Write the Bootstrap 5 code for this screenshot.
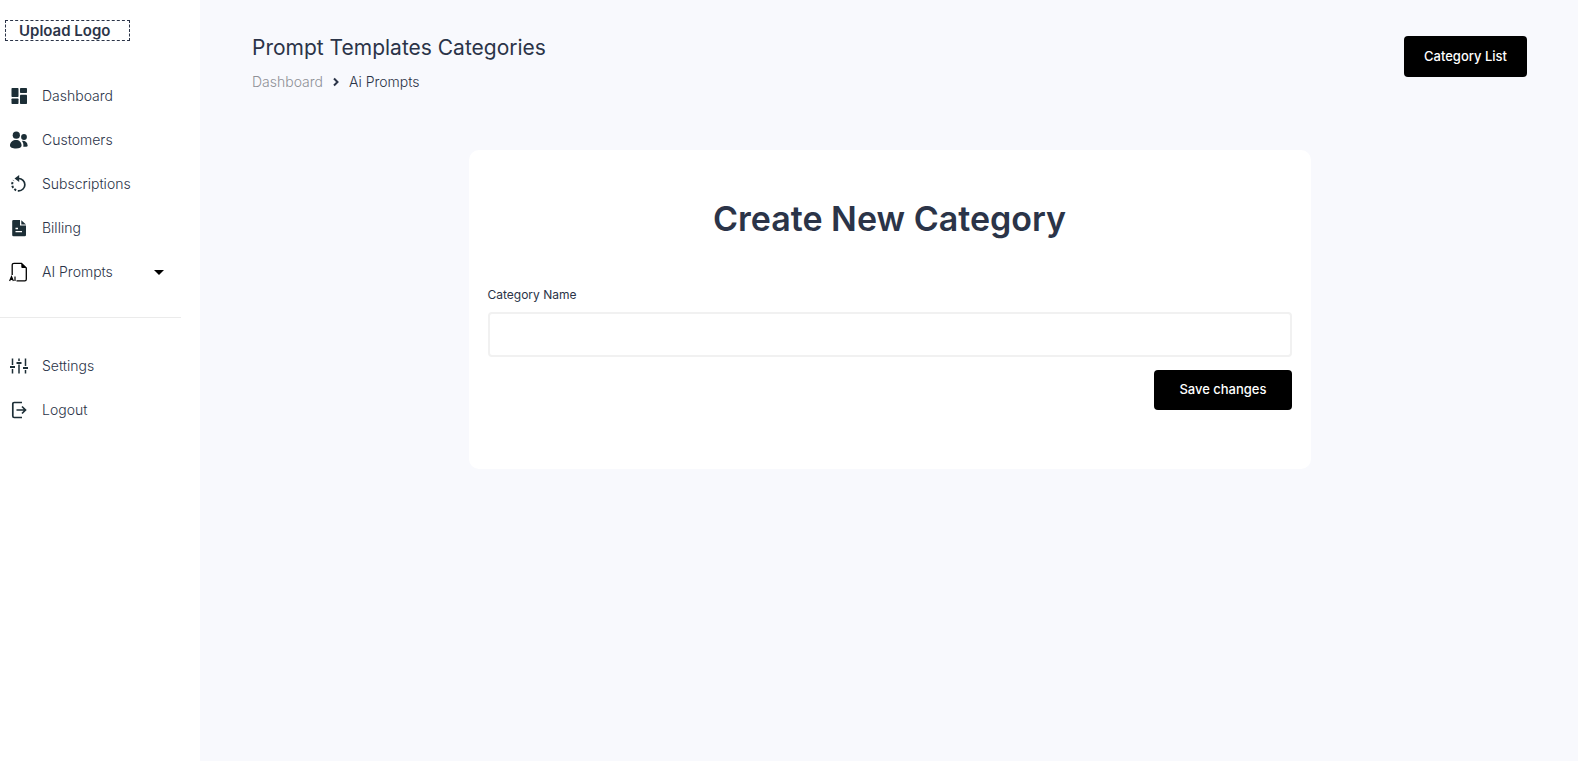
<!DOCTYPE html>
<html lang="en">
<head>
<meta charset="utf-8">
<meta name="viewport" content="width=device-width, initial-scale=1">
<title>Prompt Templates Categories</title>
<link href="https://cdn.jsdelivr.net/npm/bootstrap@5.3.0/dist/css/bootstrap.min.css" rel="stylesheet">
<style>
body { font-family: Inter, "Open Sans", sans-serif; font-size: 13px; color: #2b3448; background: #f8f9fd; }
a { color: inherit; text-decoration: none; }
.sidebar { width: 200px; padding-top: 20px; }
.logo-upload { width: 125px; height: 21px; margin-left: 5px; margin-bottom: 32px; padding: 0 13px; border: 1px dashed #2b3448; font-size: 15px; line-height: 18px; font-weight: 600; background: none; color: inherit; }
.side-link { height: 44px; padding: 0 36px 0 9px; gap: 13px; color: #2b3448; font-weight: 300; font-size: 14px; }
.side-link svg { width: 20px; height: 20px; flex: none; color: #1c2e36; margin-top: 2px; }
.side-link .caret { width: 10px; height: 5px; color: #000; }
.side-rule { width: 181px; height: 1px; margin: 24px 0 25px; background: #ebebeb; }
.main-area { padding: 36px 39px 36px 40px; }
.page-title { font-size: 21px; line-height: 24px; font-weight: 400; margin-bottom: 12px; }
.crumbs { gap: 10px; font-weight: 300; font-size: 14px; line-height: 20px; }
.crumbs a { color: #8f9197; }
.btn-ink { height: 41px; background: #000; color: #fff; border: 0; border-radius: 4px; font-size: 13px; font-weight: 500; padding: 0 20px; }
.btn-ink:hover { background: #222; color: #fff; }
.btn-save { height: 40px; padding: 0 25px; }
.page-head { margin-bottom: 58px; }
.panel { border-radius: 10px; padding: 49px 19px 59px; }
.panel h2 { font-size: 34px; line-height: 40px; font-weight: 600; margin-bottom: 47px; }
.panel label { font-size: 12px; line-height: 18px; margin-bottom: 8px; font-weight: 400; }
.panel .form-control { height: 45px; border: 2px solid #f1f1f1; border-radius: 4px; margin-bottom: 13px; }
</style>
</head>
<body>
<div class="d-flex min-vh-100">
  <aside class="sidebar bg-white flex-shrink-0">
    <button type="button" class="logo-upload d-block text-start">Upload Logo</button>
    <nav aria-label="Main">
      <a href="#" class="side-link d-flex align-items-center">
        <svg viewBox="0 0 20 20" fill="currentColor"><rect x="2.500" y="2" width="7" height="9" rx=".7"/><rect x="11" y="2" width="7" height="5" rx=".7"/><rect x="2.500" y="12.500" width="7" height="5.500" rx=".7"/><rect x="11" y="8.700" width="7" height="9.300" rx=".7"/></svg>
        <span>Dashboard</span></a>
      <a href="#" class="side-link d-flex align-items-center">
        <svg viewBox="0 0 20 20" fill="currentColor"><circle cx="7.300" cy="5.200" r="3.600"/><circle cx="15" cy="7" r="2.900"/><path d="M1 15.500C1 12 4 10 7 10s5.600 2 5.600 5.500C12.600 17.500 10.500 18.500 7 18.500S1 17.500 1 15.500zM13 10.900c3-.3 5.500 1.500 5.700 5-.7.700-2.500 1-4.400.9.400-2.500-.1-4.500-1.300-5.900z"/></svg>
        <span>Customers</span></a>
      <a href="#" class="side-link d-flex align-items-center">
        <svg viewBox="0 0 20 20" fill="none" stroke="currentColor" stroke-width="1.700"><path d="M8.500 4.500h1.200a6 6 0 1 1 0 12.300H8.800"/><path d="M7.200 16.200a6.200 6.200 0 0 1-2.600-9.800" stroke-dasharray="2.200 1.600" stroke-width="2"/><path d="M10.200 1v7L5.500 4.500z" fill="currentColor" stroke="none"/></svg>
        <span>Subscriptions</span></a>
      <a href="#" class="side-link d-flex align-items-center">
        <svg viewBox="0 0 20 20"><path fill="currentColor" d="M4.500 2H11v5.500h6V17a1.300 1.300 0 0 1-1.300 1.300H4.500A1.300 1.300 0 0 1 3.200 17V3.300A1.300 1.300 0 0 1 4.500 2zM12.300 2.200 17 6.500h-4.700z"/><path stroke="#fff" stroke-width="1.300" d="M6.500 10.500H9M6.500 13.700H13"/></svg>
        <span>Billing</span></a>
      <a href="#" class="side-link d-flex align-items-center" aria-expanded="false">
        <svg viewBox="0 0 20 20" fill="none" stroke="#000"><path stroke-width="1.300" d="M3.200 13V3.200C3.200 2 4 1.400 5 1.400h7.500L17.300 6v11.200c0 1-.6 1.600-1.500 1.600H7.500"/><path d="M12.300 1v3.800c0 .8.500 1.200 1.200 1.200h4z" fill="#000" stroke="none"/><path stroke-width="1.200" d="M.6 19 2.500 14.500 4.400 19M1.200 17.500h2.600M6 14.500V19"/></svg>
        <span class="me-auto">AI Prompts</span>
        <svg class="caret" viewBox="0 0 10 5" fill="currentColor"><path d="M0 0h10L5 5z"/></svg></a>
      <div class="side-rule"></div>
      <a href="#" class="side-link d-flex align-items-center">
        <svg viewBox="0 0 20 20" fill="none" stroke="currentColor" stroke-width="1.500"><path d="M3.500 2.500V9M3.500 13v4.500M10 2.500V5M10 8.500v9M16.500 2.500V10M16.500 14v3.500"/><path stroke-width="2.200" d="M1 11h5M7.500 7h5M14 12h5"/></svg>
        <span>Settings</span></a>
      <a href="#" class="side-link d-flex align-items-center">
        <svg viewBox="0 0 20 20" fill="none" stroke="currentColor" stroke-width="1.700"><path d="M13 2.500H5.200C4.300 2.500 3.800 3 3.800 3.900v12.200c0 .9.500 1.400 1.400 1.400H13M7.500 10h8.800M13 6.500l3.500 3.500-3.500 3.500"/></svg>
        <span>Logout</span></a>
    </nav>
  </aside>
  <main class="main-area flex-grow-1">
    <div class="page-head d-flex justify-content-between align-items-start px-2 mx-1">
      <div>
        <h1 class="page-title">Prompt Templates Categories</h1>
        <nav class="crumbs d-flex align-items-center" aria-label="Breadcrumb">
          <a href="#">Dashboard</a>
          <svg width="6" height="10" viewBox="0 0 6 10" fill="none" stroke="currentColor" stroke-width="2"><path d="M1 1.500 4.500 5 1 8.500"/></svg>
          <span>Ai Prompts</span>
        </nav>
      </div>
      <button type="button" class="btn btn-ink">Category List</button>
    </div>
    <div class="row justify-content-center g-0">
      <div class="col-8 px-2">
        <form class="panel bg-white mx-1">
          <h2 class="text-center">Create New Category</h2>
          <label for="catName" class="d-block">Category Name</label>
          <input id="catName" type="text" class="form-control">
          <div class="d-flex justify-content-end">
            <button type="submit" class="btn btn-ink btn-save">Save changes</button>
          </div>
        </form>
      </div>
    </div>
  </main>
</div>
<script src="https://cdn.jsdelivr.net/npm/bootstrap@5.3.0/dist/js/bootstrap.bundle.min.js"></script>
</body>
</html>
